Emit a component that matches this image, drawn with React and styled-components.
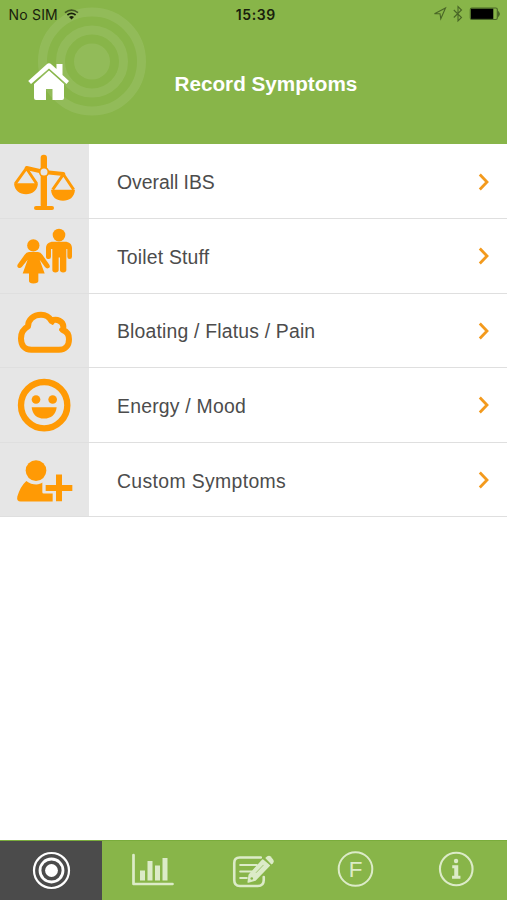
import React from "react";
import styled, { createGlobalStyle } from "styled-components";

const GREEN = "#88b549";
const ORANGE = "#ff9a05";
const CELL = "#e6e6e6";
const PALE = "#dcebc8";

const GlobalStyle = createGlobalStyle`
  * { box-sizing: border-box; }
  body { margin: 0; background: #fff; }
`;

const Screen = styled.div`
  width: 507px;
  height: 900px;
  display: flex;
  flex-direction: column;
  overflow: hidden;
  background: #fff;
  font-family: "Liberation Sans", Arial, sans-serif;
`;

const Header = styled.header`
  position: relative;
  flex: none;
  height: 144.4px;
  background: ${GREEN};
`;

const Rings = styled.svg`
  position: absolute;
  left: 36px;
  top: 6px;
  width: 112px;
  height: 112px;
`;

const StatusBar = styled.div`
  position: relative;
  display: grid;
  grid-template-columns: 1fr auto 1fr;
  align-items: center;
  height: 28px;
  padding: 0 7px 0 8.5px;
  color: #18200c;
  font-family: Inter, sans-serif;
  font-size: 14px;
`;

const Carrier = styled.div`
  display: flex;
  align-items: center;
  gap: 6px;
  letter-spacing: 0.2px;
`;

const Clock = styled.div`
  font-weight: 600;
  font-size: 14px;
  letter-spacing: 0.6px;
  padding-left: 3px;
`;

const Indicators = styled.div`
  display: flex;
  justify-content: flex-end;
  align-items: center;
`;

const StatusIcon = styled.svg`
  display: block;
  width: ${(p) => p.$w}px;
  height: ${(p) => p.$h}px;
`;

const TitleBar = styled.div`
  position: relative;
  display: grid;
  grid-template-columns: 98px 1fr 73px;
  align-items: center;
  height: 112px;
`;

const HomeButton = styled.button`
  padding: 0;
  margin: -6px 0 0 28px;
  width: 42px;
  height: 38px;
  border: 0;
  background: none;
  svg { display: block; width: 42px; height: 38px; }
`;

const Title = styled.h1`
  margin: 0;
  justify-self: start;
  padding: 0 0 0 76.5px;
  white-space: nowrap;
  color: #fff;
  font-size: 20.7px;
  line-height: 24px;
`;

const List = styled.main`
  flex: 1;
`;

const Row = styled.div`
  display: grid;
  grid-template-columns: 88.5px 1fr 34px;
  align-items: center;
  height: 74.6px;
  border-bottom: 1.6px solid #dfdfdf;
`;

const IconCell = styled.div`
  height: 73.6px;
  background: ${CELL};
  svg { display: block; width: 88px; height: 74.6px; }
`;

const Label = styled.div`
  padding: 2px 0 0 28.5px;
  color: #4c4c4c;
  font-size: 19.4px;
  line-height: 24px;
  letter-spacing: ${(p) => p.$tracking}px;
`;

const Chevron = styled.svg`
  width: 18px;
  height: 20px;
  margin-top: 1px;
`;

const TabBar = styled.nav`
  flex: none;
  display: grid;
  grid-template-columns: 102px repeat(4, 101.25px);
  height: 60px;
  background: ${GREEN};
  border-top: 1px solid #7aac3c;
`;

const Tab = styled.button`
  padding: 0;
  border: 0;
  background: ${(p) => (p.$active ? "#4b4b4b" : "transparent")};
  svg { display: block; width: 100%; height: 59px; }
`;

const Scales = () => (
  <svg viewBox="0 12 264 223.8" fill={ORANGE} stroke={ORANGE}>
    <rect x="122" y="44" width="19" height="160" rx="9" stroke="none" />
    <rect x="102" y="198" width="60" height="12" rx="6" stroke="none" />
    <path d="M80 84L132 96L190 102" strokeWidth="12" strokeLinecap="round" strokeLinejoin="round" fill="none" />
    <path d="M46 131L79 85L110 131M158 149L190 103L221 149" strokeWidth="8.5" strokeLinejoin="round" fill="none" />
    <path d="M42 130H114C112 153 97 163 78 163S44 153 42 130ZM153 149H225C223 172 208 182 189 182S155 172 153 149Z" stroke="none" />
    <circle cx="132" cy="96" r="13" fill={CELL} strokeWidth="5" />
  </svg>
);

const People = () => (
  <svg viewBox="0 10.8 264 223.8" fill={ORANGE}>
    <circle cx="177" cy="59" r="19" />
    <path d="M160 79H194C208 79 216 86 216 98V124Q216 131 209 131Q202 131 202 124V101H199V164Q199 171 189.5 171Q180 171 180 164V126H176V164Q176 171 166 171Q157 171 157 164V101H153V124Q153 131 146 131Q138 131 138 124V98C138 86 146 79 160 79Z" />
    <circle cx="100" cy="89" r="23" fill={CELL} />
    <circle cx="100" cy="90" r="18.500" />
    <path d="M87 110H114Q122 110 127 118L148 148Q152 155 146 158Q140 161 135 155L119 133L134 174H115V197Q115 204 100 204Q87 204 87 197V174H68L83 133L66 154Q61 160 55 157Q50 154 53 147L74 118Q79 110 87 110Z" />
  </svg>
);

const Cloud = () => (
  <svg viewBox="0 9.6 264 223.8" fill="none" stroke={ORANGE} strokeWidth="18" strokeLinejoin="round">
    <path d="M94 177C73 177 63 163 63 143C63 126 71 114 84 107C84 86 101 72 123 72C137 72 148 79 154 90C171 82 189 92 190 107Q190 112 189 118C200 122 207 132 207 145C207 164 196 177 177 177Z" />
    <path d="M154 90L158 97M189 118L182 117" strokeWidth="10" strokeLinecap="round" />
  </svg>
);

const Smile = () => (
  <svg viewBox="0 8.4 264 223.8" fill={ORANGE}>
    <circle cx="132.500" cy="120" r="69.500" fill="none" stroke={ORANGE} strokeWidth="19" />
    <circle cx="108" cy="103" r="13" />
    <circle cx="158" cy="103" r="13" />
    <path d="M95 126H170C168 148 153 160 132 160S97 148 95 126Z" />
  </svg>
);

const AddPerson = () => (
  <svg viewBox="0 7.2 264 223.8" fill={ORANGE}>
    <circle cx="108" cy="90" r="31" />
    <path d="M79 121C94 134 119 134 127 126V155Q127 159 131 159H158V183H62Q49 183 52 168Q61 137 79 121Z" />
    <path d="M168 102H186V133H217V151H186V182H168V151H137V133H168Z" />
  </svg>
);

const rows = [
  { label: "Overall IBS", Icon: Scales, tracking: -0.03 },
  { label: "Toilet Stuff", Icon: People, tracking: 0.18 },
  { label: "Bloating / Flatus / Pain", Icon: Cloud, tracking: 0.18 },
  { label: "Energy / Mood", Icon: Smile, tracking: 0.22 },
  { label: "Custom Symptoms", Icon: AddPerson, tracking: 0.36 },
];

const TargetIcon = () => (
  <svg viewBox="0 0 102 59" fill="none" stroke="#fff">
    <circle cx="51.500" cy="29.500" r="17.500" strokeWidth="2.200" />
    <circle cx="51.500" cy="29.500" r="11.500" strokeWidth="2.800" />
    <circle cx="51.500" cy="29.500" r="6.400" fill="#fff" stroke="none" />
  </svg>
);

const ChartIcon = () => (
  <svg viewBox="102 841 101.250 59" fill={PALE}>
    <path d="M133.500 855V884H172.500" fill="none" stroke={PALE} strokeWidth="2.700" strokeLinecap="round" strokeLinejoin="round" />
    <path d="M140 870.500H145V880.500H140ZM147.500 861H152.500V880.500H147.500ZM155 865.500H160V880.500H155ZM162.500 858H167.500V880.500H162.500Z" />
  </svg>
);

const NoteIcon = () => (
  <svg viewBox="203.250 841 101.250 59" fill="none" stroke={PALE} strokeWidth="2.600" strokeLinecap="round">
    <path d="M261 857.500H240Q234.500 857.500 234.500 863V880Q234.500 886 240 886H258Q264 886 264 880V877" />
    <path d="M240.500 865H257M240.500 871.500H252M240.500 878H247" strokeWidth="2.200" />
    <path d="M249.500 875L263 860L269.500 865.500L255.500 880L248.500 882Z" fill={PALE} stroke={PALE} strokeWidth="1.600" strokeLinejoin="round" />
    <path d="M265.500 858L267.500 856.200Q269.500 855 271 856.500L273.700 860Q274.700 861.700 273.200 863.200L271.700 864.500Z" fill={PALE} stroke="none" />
    <path d="M256.500 872.500L263.500 865.200" stroke={GREEN} strokeWidth="0.700" />
    <circle cx="252" cy="878.500" r="1.300" fill={GREEN} stroke="none" />
  </svg>
);

const FIcon = () => (
  <svg viewBox="304.500 841 101.250 59">
    <circle cx="355" cy="869" r="16.800" fill="none" stroke={PALE} strokeWidth="2" />
    <text x="355" y="877" textAnchor="middle" fill={PALE} fontFamily="Liberation Sans, sans-serif" fontSize="22.500">F</text>
  </svg>
);

const InfoIcon = () => (
  <svg viewBox="405.750 841 101.250 59">
    <circle cx="456" cy="869" r="16.300" fill="none" stroke={PALE} strokeWidth="2.100" />
    <circle cx="455.800" cy="861" r="2.200" fill={PALE} />
    <path d="M452 865.300H458V875.800H460.200V878.700H451.800V875.800H454V868.200H452Z" fill={PALE} />
  </svg>
);

const tabs = [
  { name: "Record", Icon: TargetIcon, active: true },
  { name: "Charts", Icon: ChartIcon },
  { name: "Notes", Icon: NoteIcon },
  { name: "Food", Icon: FIcon },
  { name: "Information", Icon: InfoIcon },
];

export default function App() {
  return (
    <Screen>
      <GlobalStyle />
      <Header>
        <Rings viewBox="36 6 112 112" fill="none" stroke="#fff" strokeOpacity="0.09">
          <circle cx="92" cy="61.500" r="49.500" strokeWidth="9" />
          <circle cx="92" cy="61.500" r="31.500" strokeWidth="9" />
          <circle cx="92" cy="61.500" r="18" fill="#fff" fillOpacity="0.09" stroke="none" />
        </Rings>
        <StatusBar>
          <Carrier>
            No SIM
            <StatusIcon $w={15} $h={11} viewBox="0 0 15 11" fill="none" stroke="#18200c" strokeWidth="1.700">
              <path d="M1 3.700Q7.500 -1.600 14 3.700" strokeOpacity="0.650" />
              <path d="M3.400 6Q7.500 2.600 11.600 6" />
              <path d="M5 8Q7.500 6 10 8L7.500 10.600Z" fill="#18200c" stroke="none" />
            </StatusIcon>
          </Carrier>
          <Clock>15:39</Clock>
          <Indicators>
            <StatusIcon $w={66} $h={18} viewBox="434 4 66 18" fill="none" stroke="#496626" strokeWidth="1.100">
              <path d="M434.500 12.700L445.500 7L440.800 17.700L440 12.700Z" />
              <path d="M453.800 9L461.500 16.500L458 20V5.500L461.500 9L453.800 16.500" />
              <rect x="470.300" y="7" width="27" height="11.500" rx="1.500" />
              <rect x="471" y="7.700" width="22.300" height="10.200" fill="#000" stroke="none" />
              <path d="M498.300 11Q500.200 13 498.300 15Z" fill="#222" />
            </StatusIcon>
          </Indicators>
        </StatusBar>
        <TitleBar>
          <HomeButton aria-label="Home">
            <svg viewBox="28 62 42 38" fill="#fff">
              <path d="M56.500 64H62.500V75L69 81L66.500 84L49 68.500L31 84L28.200 81L46.500 64.500Q49 62 51.500 64.500L56.500 69Z" />
              <path d="M49 70.500L64 84V98Q64 100 62 100H52.500V89H46V100H36Q34 100 34 98V84Z" />
            </svg>
          </HomeButton>
          <Title>Record Symptoms</Title>
        </TitleBar>
      </Header>
      <List>
        {rows.map(({ label, Icon, tracking }) => (
          <Row key={label}>
            <IconCell><Icon /></IconCell>
            <Label $tracking={tracking}>{label}</Label>
            <Chevron viewBox="0 0 18 20" fill="none" stroke="#f39a1d" strokeWidth="2.800">
              <path d="M6.800 2.500L14 10L6.800 17.500" />
            </Chevron>
          </Row>
        ))}
      </List>
      <TabBar>
        {tabs.map(({ name, Icon, active }) => (
          <Tab key={name} $active={active} aria-label={name}><Icon /></Tab>
        ))}
      </TabBar>
    </Screen>
  );
}
